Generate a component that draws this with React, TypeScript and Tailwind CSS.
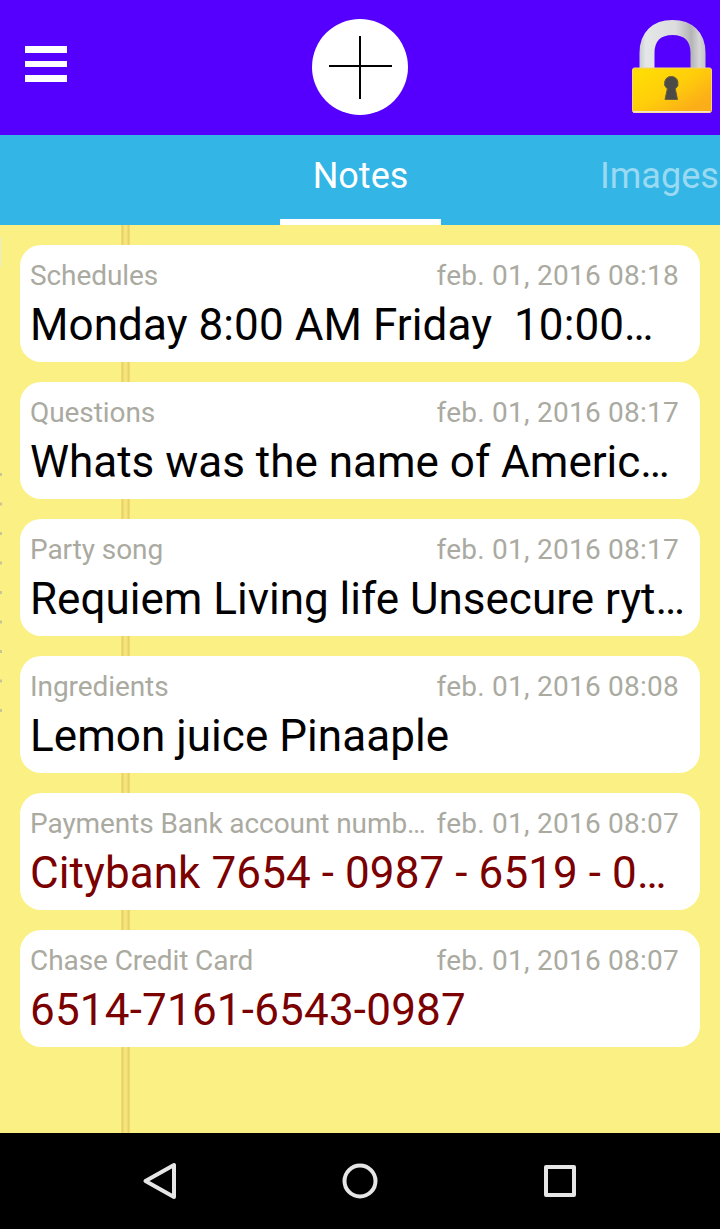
interface Note {
  title: string
  date: string
  text: string
  tracking?: string
  secure?: boolean
}

const notes: Note[] = [
  {
    title: 'Schedules',
    date: 'feb. 01, 2016 08:18',
    text: 'Monday 8:00 AM Friday  10:00…',
    tracking: 'tracking-[0.08px]',
  },
  { title: 'Questions', date: 'feb. 01, 2016 08:17', text: 'Whats was the name of Americ…' },
  { title: 'Party song', date: 'feb. 01, 2016 08:17', text: 'Requiem Living life Unsecure ryt…' },
  {
    title: 'Ingredients',
    date: 'feb. 01, 2016 08:08',
    text: 'Lemon juice Pinaaple',
    tracking: 'tracking-[0.05px]',
  },
  {
    title: 'Payments Bank account numb…',
    date: 'feb. 01, 2016 08:07',
    text: 'Citybank 7654 - 0987 - 6519 - 0…',
    tracking: 'tracking-[0.09px]',
    secure: true,
  },
  {
    title: 'Chase Credit Card',
    date: 'feb. 01, 2016 08:07',
    text: '6514-7161-6543-0987',
    tracking: 'tracking-[0.2px]',
    secure: true,
  },
]

const LockIcon = () => (
  <svg className="h-[96px] w-[82px]" viewBox="0 0 82 96" fill="none">
    <defs>
      <linearGradient id="shackle" x1="8" y1="0" x2="75" y2="0" gradientUnits="userSpaceOnUse">
        <stop offset="0" stopColor="#c6cbce" />
        <stop offset="0.1" stopColor="#e4e6e8" />
        <stop offset="0.55" stopColor="#dcdcdd" />
        <stop offset="0.78" stopColor="#b4b4b6" />
        <stop offset="0.9" stopColor="#d6d6d8" />
        <stop offset="1" stopColor="#c3c3c6" />
      </linearGradient>
      <linearGradient id="body" x1="20" y1="48" x2="50" y2="96" gradientUnits="userSpaceOnUse">
        <stop offset="0" stopColor="#ffdc05" />
        <stop offset="0.5" stopColor="#ffce0a" />
        <stop offset="1" stopColor="#fcae18" />
      </linearGradient>
    </defs>
    <path d="M16 54V34C16 17 26 8.500 41.500 8.500S67 17 67 34V54" stroke="url(#shackle)" strokeWidth="15" />
    <rect x="1.500" y="49" width="79" height="44.500" rx="2" fill="url(#body)" stroke="#f3d27a" />
    <path d="M2 92.800H79" stroke="#fae6c3" strokeWidth="1.500" />
    <path
      d="M40.300 57.500a6.800 6.800 0 0 1 4 12.300L46.500 80.500H34L36.300 69.800a6.800 6.800 0 0 1 4-12.300Z"
      fill="#4c4a47"
      stroke="#6d5f35"
      strokeWidth="1"
    />
  </svg>
)

const Header = () => (
  <header className="flex h-[135px] items-start justify-between bg-[#5500ff] pl-[25px] pr-[7px]">
    <button className="mt-[46px] flex w-[88px] flex-col gap-2" aria-label="Menu">
      <span className="h-[6.667px] w-[42px] bg-white" />
      <span className="h-[6.667px] w-[42px] bg-white" />
      <span className="h-[6.667px] w-[42px] bg-white" />
    </button>
    <button className="mr-6 mt-[19px]" aria-label="Add note">
      <svg className="h-24 w-24" viewBox="0 0 96 96">
        <circle cx="48" cy="48" r="48" fill="#fff" />
        <path d="M48 17V80M17 47H80" stroke="#000" strokeWidth="2" />
      </svg>
    </button>
    <button className="mt-[19px]" aria-label="Lock">
      <LockIcon />
    </button>
  </header>
)

const Tabs = () => (
  <nav className="flex h-[90px] overflow-hidden bg-[#33b5e5] text-[36px] leading-[42px]">
    <div className="w-[280px]" />
    <button className="w-[161px] border-b-[6px] border-white pb-[2px] text-center text-white">Notes</button>
    <button className="flex-1 pb-2 pl-[159px] text-left text-[#99daf2]">Images</button>
  </nav>
)

const NoteCard = ({ title, date, text, tracking, secure }: Note) => (
  <article className="h-[117px] rounded-[21px] bg-white pl-[10px] pr-[21px] pt-[14px] whitespace-pre">
    <div className="flex justify-between text-[28px] leading-[33px] text-[#aaaaa1]">
      <span className="tracking-[-0.08px]">{title}</span>
      <time className="tracking-[0.24px]">{date}</time>
    </div>
    <p className={`mt-[7px] text-[44px] leading-[52px] ${tracking ?? ''} ${secure ? 'text-[#7b0000]' : 'text-black'}`}>
      {text}
    </p>
  </article>
)

// Legal pad paper: the margin rule and the perforation along the left edge
const Paper = () => (
  <svg className="absolute inset-0 h-full w-full" viewBox="0 0 720 908">
    <rect width="720" height="908" fill="#faf083" />
    <rect x="121" width="9" height="908" fill="#f6e67a" />
    <path d="M122.500 0V908M128.500 0V908" stroke="#e8d06a" strokeWidth="2" />
    <path d="M1 248V490" stroke="#c9c596" strokeWidth="2" strokeDasharray="3 26.500" />
    <path d="M0 12V42" stroke="#f3edaa" strokeWidth="4" />
  </svg>
)

const NavBar = () => (
  <footer className="flex h-24 items-center justify-center gap-[160px] bg-black">
    <svg className="h-10 w-10" viewBox="0 0 40 40" fill="none" stroke="#e6e6e6" strokeWidth="4" strokeLinejoin="round">
      <path d="M34 4V36L5.500 20Z" />
    </svg>
    <svg className="h-10 w-10" viewBox="0 0 40 40" fill="none" stroke="#e6e6e6" strokeWidth="4">
      <circle cx="20" cy="20" r="15.500" />
    </svg>
    <svg className="h-10 w-10" viewBox="0 0 40 40" fill="none" stroke="#e6e6e6" strokeWidth="4" strokeLinejoin="round">
      <path d="M6 6H34V34H6Z" />
    </svg>
  </footer>
)

const App = () => {
  return (
    <div className="flex h-[1229px] w-[720px] flex-col overflow-hidden font-['Roboto',sans-serif]">
      <Header />
      <Tabs />
      <main className="relative flex-1">
        <Paper />
        <div className="relative flex flex-col gap-5 p-5">
          {notes.map((note) => (
            <NoteCard key={note.title} {...note} />
          ))}
        </div>
      </main>
      <NavBar />
    </div>
  )
}

export default App
